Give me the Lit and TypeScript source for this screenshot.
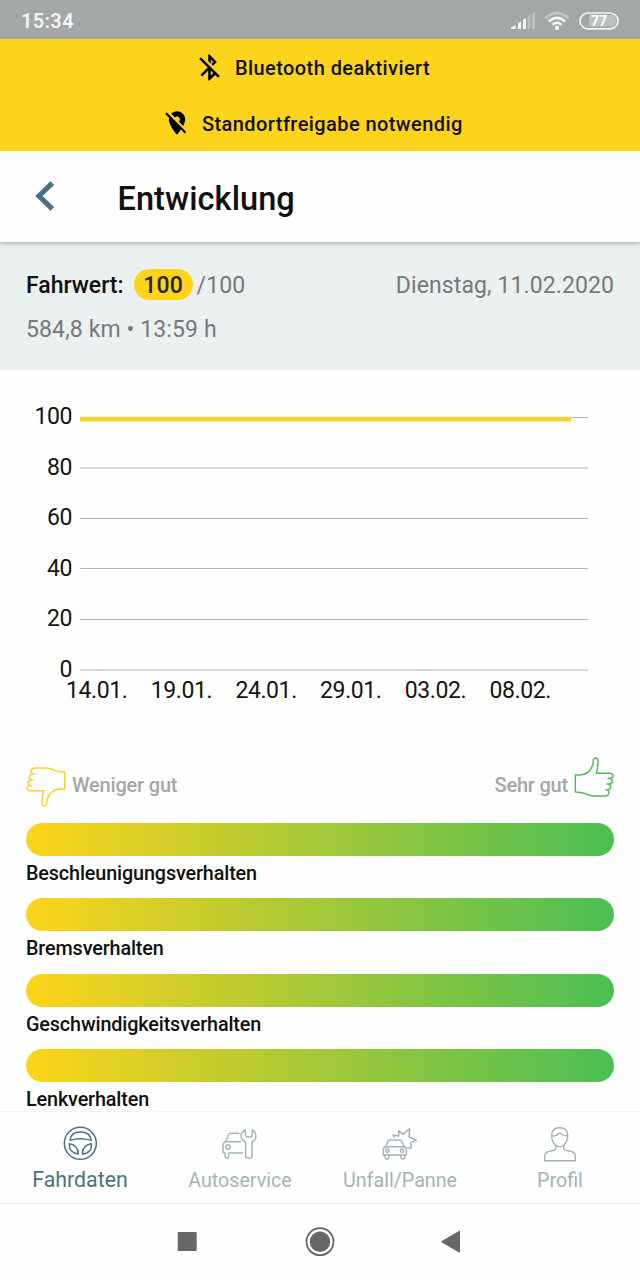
import { LitElement, html, svg, css } from "lit";
import { customElement } from "lit/decorators.js";

const GRID = [
  { value: 100, line: 47.5, base: 54 },
  { value: 80, line: 98, base: 105 },
  { value: 60, line: 148.5, base: 155 },
  { value: 40, line: 198.5, base: 206 },
  { value: 20, line: 249.5, base: 256 },
  { value: 0, line: 300, base: 307 },
];
const DATES = ["14.01.", "19.01.", "24.01.", "29.01.", "03.02.", "08.02."];
const RATINGS = [
  "Beschleunigungsverhalten",
  "Bremsverhalten",
  "Geschwindigkeitsverhalten",
  "Lenkverhalten",
];

const wheel = svg`
  <circle cx="241" cy="159" r="48"/>
  <path d="M210 150Q212 125 241 125Q271 125 274 150Q241 141 210 150Z"/>
  <path d="M208 160Q206 188 235 191Q235 164 208 160Z"/>
  <path d="M274 160Q277 188 247 191Q247 164 274 160Z"/>`;
const service = svg`
  <path d="M718 131H694Q688 131 686 136L678 156Q670 159 670 168V187Q670 190 674 190H676V201Q676 205 680 205H683Q687 205 687 201V190H729"/>
  <path d="M679 156H723"/>
  <circle cx="685" cy="172" r="6.5"/>
  <path d="M737 121Q724 126 724 139Q724 151 738 157V199Q738 205 744 205H751Q757 205 757 199V157Q769 151 769 139Q769 126 758 121V136Q758 142 748 142Q737 142 737 136Z"/>`;
const crash = svg`
  <path d="M197 172L203 156Q205 151 210 151H239Q244 151 246 156L253 172"/>
  <path d="M199 171H251Q259 171 259 180V196H190V180Q190 171 199 171Z"/>
  <path d="M195 196V204Q195 208 199 208H202Q206 208 206 204V197M243 197V204Q243 208 247 208H250Q254 208 254 204V196"/>
  <circle cx="202" cy="183" r="5"/><circle cx="246" cy="183" r="5"/>
  <path d="M223 143L219 136L236 139V123L249 134L269 117L267 142L289 152L272 158L274 175L263 174"/>`;
const person = svg`
  <path d="M695 138Q695 114 719 114Q743 114 743 138Q743 155 732 166Q719 177 706 166Q695 155 695 138Z"/>
  <path d="M696 139Q710 140 718 130Q730 138 743 139"/>
  <path d="M707 168V178Q705 182 692 184Q674 187 674 198V213H766V198Q766 187 748 184Q733 182 731 178V168"/>`;

const TABS = [
  { label: "Fahrdaten", cls: "tab active", box: "186 107 108 108", icon: wheel },
  { label: "Autoservice", cls: "tab", box: "667 109 108 108", icon: service },
  { label: "Unfall/Panne", cls: "tab", box: "186 109 108 108", icon: crash },
  { label: "Profil", cls: "tab", box: "666 109 108 108", icon: person },
];

@customElement("status-bar")
class StatusBar extends LitElement {
  static styles = css`
    :host { display: flex; height: 39px; background: #a3a7a7; align-items: center; justify-content: space-between; box-sizing: border-box; padding: 2px 20px 0 21px; color: #f4f5f5; }
    .time { font-size: 20px; font-weight: 600; letter-spacing: 0.35px; }
    svg { display: block; }
    .pct { font: 700 14px Roboto, sans-serif; }
  `;
  render() {
    return html`<span class="time">15:34</span>
      <svg width="110" height="22" viewBox="510 9 110 22">
        <g fill="#f4f5f5">
          <path d="M511 28V26.5L515.5 24V28Z"/>
          <path d="M518 22.2L521 20.5V28H518ZM523 19L526 17V28H523Z"/>
          <path opacity=".35" d="M527.6 15.8L530.4 14V28H527.6ZM532.2 13L535 11V28H532.2Z"/>
          <circle cx="557" cy="26.8" r="2.2"/>
        </g>
        <g fill="none" stroke="#f4f5f5" stroke-width="2.6">
          <path opacity=".4" d="M545.4 17.2Q557 7 568.6 17.2"/>
          <path d="M548.8 20.5Q557 13.2 565.2 20.5"/>
          <path d="M552.3 23.8Q557 19.5 561.7 23.8"/>
        </g>
        <rect x="580" y="12" width="38" height="15.8" rx="7.9" fill="none" stroke="#f4f5f5" stroke-width="1.7"/>
        <path d="M589 14H613Q616 16 616 20Q616 23 613 25.5H589Z" fill="#fff" opacity=".3"/>
        <text class="pct" x="591" y="25" fill="#fff">77</text>
      </svg>`;
  }
}

@customElement("trend-chart")
class TrendChart extends LitElement {
  static styles = css`
    :host { display: block; height: 370px; }
    svg { display: block; }
    text { font: 400 23px Roboto, sans-serif; fill: #141414; letter-spacing: -0.4px; }
    .grid { stroke: #b2b2b2; stroke-width: 1; }
    .series { stroke: #f9d32b; stroke-width: 4.4; }
  `;
  render() {
    return html`<svg width="640" height="370" viewBox="0 0 640 370">
      ${GRID.map((g) => svg`<line class="grid" x1="80" x2="588" y1=${g.line} y2=${g.line}/>
        <text x="72" y=${g.base} text-anchor="end">${g.value}</text>`)}
      <line class="series" x1="80" x2="571" y1="49.3" y2="49.3"/>
      ${DATES.map((d, i) => svg`<text x=${96.7 + i * 84.7} y="328" text-anchor="middle">${d}</text>`)}
    </svg>`;
  }
}

@customElement("app-root")
class AppRoot extends LitElement {
  static styles = css`
    :host { display: flex; flex-direction: column; width: 640px; height: 1280px; overflow: hidden; background: #fefefe; font-family: Roboto, sans-serif; color: #111; white-space: nowrap; }
    svg { display: block; flex: none; }
    .banner { height: 112px; flex: none; background: #fcd41c; font-size: 20px; font-weight: 500; letter-spacing: 0.42px; }
    .notice { display: flex; height: 56px; align-items: center; }
    .notice span { padding-top: 2px; }
    .bt { padding-left: 194px; gap: 10px; }
    .loc { padding-left: 162.5px; gap: 11.5px; }
    .header { height: 91px; flex: none; display: flex; align-items: center; gap: 62.5px; padding-left: 35px; box-sizing: border-box; box-shadow: 0 1px 5px rgba(0,0,0,.3); clip-path: inset(0 0 -8px 0); background: #fefefe; z-index: 1; }
    .header svg { margin-top: -1px; }
    .title { font-size: 32.5px; font-weight: 500; padding-top: 4px; letter-spacing: 0.08px; }
    .summary { height: 128px; flex: none; box-sizing: border-box; background: #ebf0f0; padding: 26px 26px 0; font-size: 23px; letter-spacing: 0.1px; color: #767979; }
    .line { display: flex; align-items: center; height: 32px; }
    .line span { padding-top: 2px; }
    .name { color: #111; font-weight: 500; letter-spacing: 0; }
    .line .pill { background: #fcd41c; color: #28230a; font-weight: 500; width: 59px; height: 31px; line-height: 33px; padding: 0; border-radius: 16px; text-align: center; margin: 0 4px 0 10px; }
    .date { margin-left: auto; }
    .dist { margin-top: 13px; letter-spacing: 0.12px; }
    .main { flex: 1; min-height: 0; overflow: hidden; }
    .legend { display: flex; height: 83px; box-sizing: border-box; padding: 15px 25px 0 25px; justify-content: space-between; font-size: 20px; font-weight: 500; letter-spacing: -0.2px; color: #a6a6a6; }
    .side { display: flex; height: 60px; gap: 5px; }
    .side span { padding-top: 18px; }
    .thumb { fill: none; stroke-width: 4.4; stroke-linejoin: round; }
    .up { stroke: #4fba58; margin-top: 1px; }
    .down { stroke: #f5d22e; transform: rotate(180deg); margin-top: 11px; }
    .rating { height: 75.3px; padding: 0 26px; }
    .bar { height: 33px; border-radius: 16.5px; background: linear-gradient(90deg, #fed41a, #9ac73b 55%, #4bbf54); }
    .label { font-size: 19.8px; font-weight: 500; line-height: 24px; padding-top: 6px; letter-spacing: -0.13px; }
    .tabs { height: 91px; flex: none; display: flex; border-top: 1px solid #f3f3f3; border-bottom: 1px solid #ececec; background: #fefefe; }
    .tab { width: 160px; display: flex; flex-direction: column; align-items: center; color: #a4b4ba; font-size: 19.7px; padding-top: 14px; gap: 7px; box-sizing: border-box; }
    .tab svg { fill: none; stroke: currentColor; stroke-width: 4.4; stroke-linejoin: round; stroke-linecap: round; }
    .active { color: #4c7280; font-size: 21.3px; gap: 5px; }
    .nav { height: 76px; flex: none; background: #fefefe; }
  `;
  thumb(cls: string) {
    return html`<svg class="thumb ${cls}" width="42" height="42" viewBox="280 49 126 126">
      <path d="M287 106H302Q331 103 339 76Q341 68 341 61Q342 55 348 55Q356 56 355 69Q354 86 350 101H391Q401 102 400 110Q399 117 386 116H390Q399 119 397 127Q395 134 382 133H386Q395 136 393 144Q391 151 379 151H382Q390 153 387 162Q385 169 376 169H342Q329 168 317 162Q306 157 287 157Z"/>
    </svg>`;
  }
  render() {
    return html`
      <status-bar></status-bar>
      <div class="banner">
        <div class="notice bt">
          <svg width="31" height="31" viewBox="0 0 24 24"><path d="M13 5.83l1.88 1.88-1.6 1.6 1.41 1.41 3.02-3.02L12 2h-1v5.03l2 2v-3.2zM5.41 4L4 5.41 10.59 12 5 17.59 6.41 19 11 14.41V22h1l4.29-4.29 2.3 2.29L20 18.59 5.41 4zM13 18.17v-3.76l1.88 1.88L13 18.17z"/></svg>
          <span>Bluetooth deaktiviert</span>
        </div>
        <div class="notice loc">
          <svg width="28" height="28" viewBox="0 0 24 24"><path d="M12 6.5c1.38 0 2.5 1.12 2.5 2.5 0 .74-.33 1.39-.83 1.85l3.63 3.63c.98-1.86 1.7-3.8 1.7-5.48 0-3.87-3.13-7-7-7-1.98 0-3.76.83-5.04 2.15l3.19 3.19c.46-.52 1.11-.84 1.85-.84zm4.37 9.6l-4.63-4.63-.11-.11L3.27 3 2 4.27l3.18 3.18C5.07 7.95 5 8.47 5 9c0 5.25 7 13 7 13s1.67-1.85 3.38-4.35L18.73 21 20 19.73l-3.63-3.63z"/></svg>
          <span>Standortfreigabe notwendig</span>
        </div>
      </div>
      <div class="header">
        <svg width="20" height="30" viewBox="0 0 20 30"><path d="M17.3 2.2L4 15L17.3 27.8" fill="none" stroke="#467284" stroke-width="5.2"/></svg>
        <span class="title">Entwicklung</span>
      </div>
      <div class="summary">
        <div class="line"><span class="name">Fahrwert:</span><span class="pill">100</span><span>/100</span><span class="date">Dienstag, 11.02.2020</span></div>
        <div class="line dist">584,8 km • 13:59 h</div>
      </div>
      <div class="main">
        <trend-chart></trend-chart>
        <div class="legend">
          <div class="side">${this.thumb("down")}<span>Weniger gut</span></div>
          <div class="side"><span>Sehr gut</span>${this.thumb("up")}</div>
        </div>
        ${RATINGS.map((r) => html`<div class="rating"><div class="bar"></div><div class="label">${r}</div></div>`)}
      </div>
      <div class="tabs">
        ${TABS.map((t) => html`<div class=${t.cls}><svg width="36" height="36" viewBox=${t.box}>${t.icon}</svg><span>${t.label}</span></div>`)}
      </div>
      <svg class="nav" width="640" height="76" viewBox="0 1204 640 76" fill="#666">
        <rect x="177.7" y="1232" width="19" height="19" rx="1"/>
        <circle cx="320" cy="1241.7" r="10.2"/>
        <circle cx="320" cy="1241.7" r="13.5" fill="none" stroke="#666" stroke-width="1.8"/>
        <path d="M441.5 1241.7L459.5 1231.2V1252.2Z" stroke="#666" stroke-linejoin="round"/>
      </svg>`;
  }
}
